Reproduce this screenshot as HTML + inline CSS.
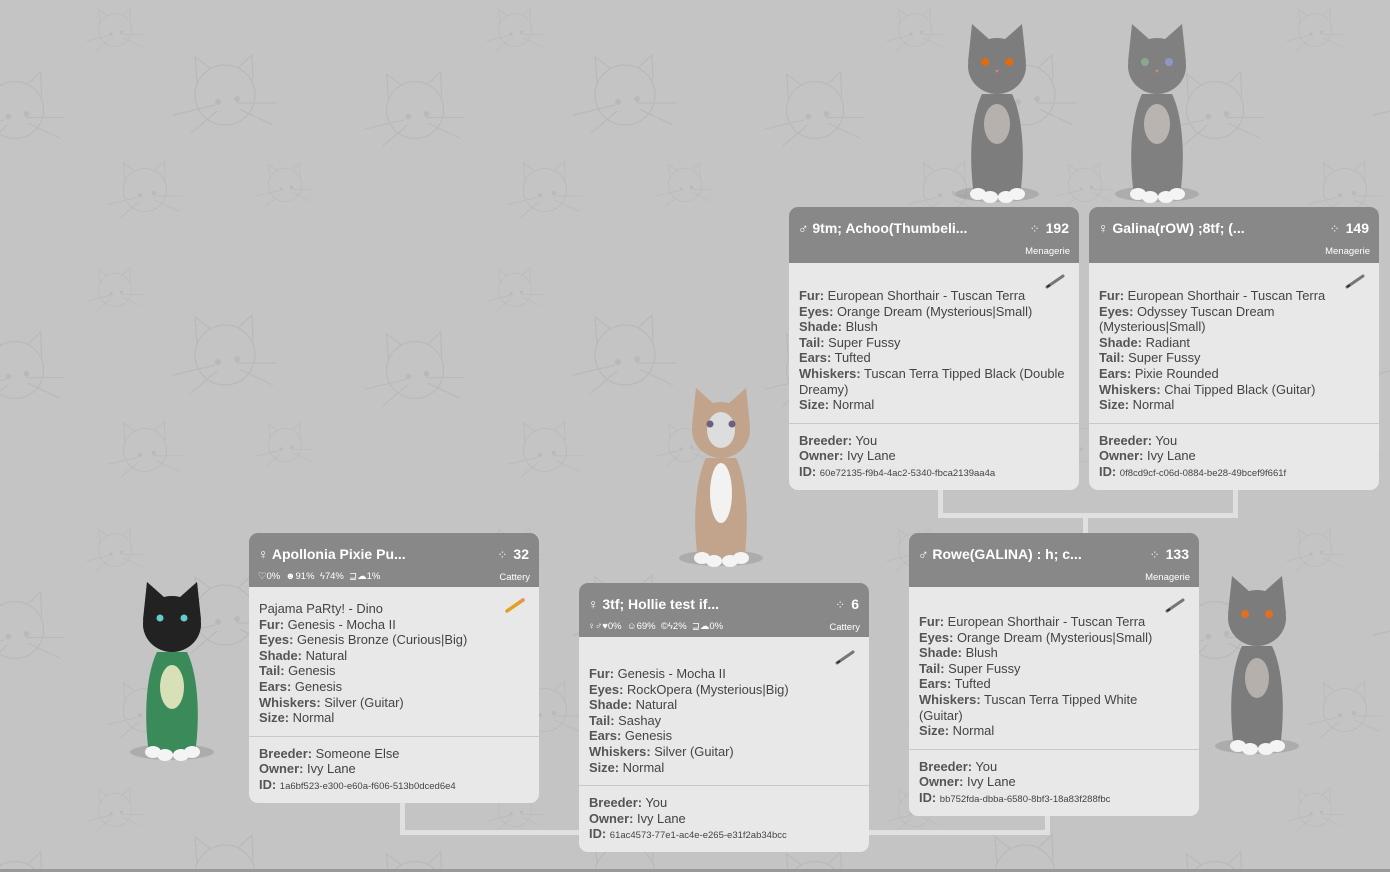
<!DOCTYPE html>
<html><head><meta charset="utf-8">
<style>
html,body{margin:0;padding:0}
body{width:1390px;height:872px;overflow:hidden;position:relative;background:#c4c4c4;font-family:"Liberation Sans","DejaVu Sans",sans-serif;}
.bg{position:absolute;left:0;top:0}
.card{position:absolute;width:290px;background:#e8e8e8;border-radius:9px;overflow:hidden;color:#444;font-size:12.9px;line-height:15.6px}
.hd{background:#888;color:#fff;height:56px;position:relative}
.hd .t{position:absolute;left:9px;top:14px;font-weight:bold;font-size:14px;color:#fff}
.hd .n{position:absolute;right:10px;top:14px;font-weight:bold;font-size:14px}
.hd .n span{font-weight:normal;font-size:12px;margin-right:6px;color:#eee}
.hd .s{position:absolute;left:9px;top:36px;font-size:9.5px}
.hd .c{position:absolute;right:9px;top:37px;font-size:9.5px}
.bd{padding:8px 10px 10px 10px;position:relative;border-bottom:1px solid #c8c8c8}
.ft{padding:9px 10px 8px 10px}
b{color:#555}
.id{font-size:9.5px}
.pen{position:absolute;right:12px;top:10px}
.ln{position:absolute;background:#e0e0e0}
.cat{position:absolute}
</style></head><body>
<svg class="bg" width="1390" height="872">
<defs>
<g id="f" fill="none" stroke="#b9b9b9" stroke-width="1.2">
<circle cx="0" cy="0" r="30"/>
<path d="M-28 -12 L-30 -38 L-14 -26 M14 -28 L27 -40 L28 -14"/>
<path d="M-10 10 L-52 20 M-8 16 L-34 38 M12 8 L52 8 M14 14 L48 30"/>
<circle cx="-7" cy="7" r="3" fill="#b9b9b9" stroke="none"/><circle cx="12" cy="4" r="3" fill="#b9b9b9" stroke="none"/>
</g>
<pattern id="p" width="400" height="260" patternUnits="userSpaceOnUse" x="-60" y="-20">
<use href="#f" transform="translate(175,50) scale(.55)"/>
<use href="#f" transform="translate(285,115)"/>
<use href="#f" transform="translate(75,130) scale(.95)"/>
<use href="#f" transform="translate(205,210) scale(.72)"/>
<use href="#f" transform="translate(345,205) scale(.55)"/>
</pattern>
</defs>
<rect width="1390" height="872" fill="url(#p)"/>
<rect y="869" width="1390" height="3" fill="#999"/>
</svg>

<svg width="0" height="0" style="position:absolute">
<defs>
<g id="cat">
<ellipse cx="45" cy="180" rx="42" ry="8" fill="#000" opacity=".12"/>
<path d="M22 182 C16 140 20 100 30 80 L60 80 C70 100 74 140 68 182 Z"/>
<path d="M16 48 L20 10 L38 26 Z M52 26 L70 10 L74 48 Z"/>
<ellipse cx="45" cy="52" rx="29" ry="28"/>
</g>
<g id="paws" fill="#f4f4f4"><ellipse cx="26" cy="180" rx="8" ry="6"/><ellipse cx="38" cy="183" rx="8" ry="6"/><ellipse cx="54" cy="183" rx="8" ry="6"/><ellipse cx="65" cy="180" rx="8" ry="6"/></g>
<g id="pen"><path d="M2 14 L18 3" stroke="#777" stroke-width="3" stroke-linecap="round"/><path d="M2 14 L5 12" stroke="#333" stroke-width="2"/></g>
</defs></svg>

<svg class="cat" style="left:952px;top:14px" width="90" height="190"><use href="#cat" fill="#7d7d7d"/><ellipse cx="45" cy="110" rx="13" ry="20" fill="#b7b1ad"/><circle cx="33" cy="48" r="4" fill="#e26a10"/><circle cx="57" cy="48" r="4" fill="#e26a10"/><path d="M43 56 l4 0 l-2 3z" fill="#c88"/><use href="#paws"/></svg>
<svg class="cat" style="left:1112px;top:14px" width="90" height="190"><use href="#cat" fill="#808080"/><ellipse cx="45" cy="110" rx="13" ry="20" fill="#b9b4b0"/><circle cx="33" cy="48" r="4" fill="#8aa890"/><circle cx="57" cy="48" r="4" fill="#8f96c4"/><path d="M43 56 l4 0 l-2 3z" fill="#c88"/><use href="#paws"/></svg>
<svg class="cat" style="left:676px;top:378px" width="90" height="190"><use href="#cat" fill="#c2a48c"/><ellipse cx="45" cy="52" rx="14" ry="18" fill="#ddd"/><ellipse cx="45" cy="115" rx="11" ry="30" fill="#f2f2f2"/><circle cx="34" cy="46" r="3.5" fill="#6a6080"/><circle cx="56" cy="46" r="3.5" fill="#6a6080"/><use href="#paws"/></svg>
<svg class="cat" style="left:127px;top:572px" width="90" height="190"><use href="#cat" fill="#3a8a5a"/><ellipse cx="45" cy="52" rx="29" ry="28" fill="#222"/><path d="M16 48 L20 10 L38 26 Z M52 26 L70 10 L74 48 Z" fill="#222"/><ellipse cx="45" cy="115" rx="12" ry="22" fill="#d8e0b8"/><circle cx="33" cy="46" r="3.5" fill="#6cc"/><circle cx="57" cy="46" r="3.5" fill="#6cc"/><use href="#paws" fill="#cfeed8"/></svg>
<svg class="cat" style="left:1212px;top:566px" width="90" height="190"><use href="#cat" fill="#7c7c7c"/><ellipse cx="45" cy="112" rx="12" ry="20" fill="#b5b0ac"/><circle cx="33" cy="48" r="4" fill="#e07020"/><circle cx="57" cy="48" r="4" fill="#e07020"/><use href="#paws"/></svg>

<div class="ln" style="left:938px;top:488px;width:5px;height:30px"></div>
<div class="ln" style="left:1233px;top:488px;width:5px;height:30px"></div>
<div class="ln" style="left:938px;top:513px;width:300px;height:5px"></div>
<div class="ln" style="left:1083px;top:513px;width:5px;height:22px"></div>
<div class="ln" style="left:400px;top:800px;width:5px;height:35px"></div>
<div class="ln" style="left:1045px;top:812px;width:5px;height:23px"></div>
<div class="ln" style="left:400px;top:830px;width:650px;height:5px"></div>

<div class="card" style="left:789px;top:207px">
<div class="hd"><div class="t">♂ 9tm; Achoo(Thumbeli...</div><div class="n"><span>⁘</span>192</div><div class="c">Menagerie</div></div>
<div class="bd" style="padding-top:25px"><svg class="pen" width="22" height="16"><use href="#pen"/></svg>
<b>Fur:</b> European Shorthair - Tuscan Terra<br><b>Eyes:</b> Orange Dream (Mysterious|Small)<br><b>Shade:</b> Blush<br><b>Tail:</b> Super Fussy<br><b>Ears:</b> Tufted<br><b>Whiskers:</b> Tuscan Terra Tipped Black (Double Dreamy)<br><b>Size:</b> Normal</div>
<div class="ft"><b>Breeder:</b> You<br><b>Owner:</b> Ivy Lane<br><b>ID:</b> <span class="id">60e72135-f9b4-4ac2-5340-fbca2139aa4a</span></div>
</div>

<div class="card" style="left:1089px;top:207px">
<div class="hd"><div class="t">♀ Galina(rOW) ;8tf; (...</div><div class="n"><span>⁘</span>149</div><div class="c">Menagerie</div></div>
<div class="bd" style="padding-top:25px"><svg class="pen" width="22" height="16"><use href="#pen"/></svg>
<b>Fur:</b> European Shorthair - Tuscan Terra<br><b>Eyes:</b> Odyssey Tuscan Dream (Mysterious|Small)<br><b>Shade:</b> Radiant<br><b>Tail:</b> Super Fussy<br><b>Ears:</b> Pixie Rounded<br><b>Whiskers:</b> Chai Tipped Black (Guitar)<br><b>Size:</b> Normal</div>
<div class="ft"><b>Breeder:</b> You<br><b>Owner:</b> Ivy Lane<br><b>ID:</b> <span class="id">0f8cd9cf-c06d-0884-be28-49bcef9f661f</span></div>
</div>

<div class="card" style="left:249px;top:533px">
<div class="hd" style="height:54px"><div class="t">♀ Apollonia Pixie Pu...</div><div class="n"><span>⁘</span>32</div><div class="s">♡0% &nbsp;☻91% &nbsp;ϟ74% &nbsp;⊒☁1%</div><div class="c">Cattery</div></div>
<div class="bd" style="padding-top:14px"><svg class="pen" width="22" height="16"><path d="M2 14 L18 3" stroke="#e0a020" stroke-width="3.5" stroke-linecap="round"/><path d="M16 4 L19 2" stroke="#e88" stroke-width="3"/></svg>
Pajama PaRty! - Dino<br><b>Fur:</b> Genesis - Mocha II<br><b>Eyes:</b> Genesis Bronze (Curious|Big)<br><b>Shade:</b> Natural<br><b>Tail:</b> Genesis<br><b>Ears:</b> Genesis<br><b>Whiskers:</b> Silver (Guitar)<br><b>Size:</b> Normal</div>
<div class="ft"><b>Breeder:</b> Someone Else<br><b>Owner:</b> Ivy Lane<br><b>ID:</b> <span class="id">1a6bf523-e300-e60a-f606-513b0dced6e4</span></div>
</div>

<div class="card" style="left:579px;top:583px">
<div class="hd" style="height:54px"><div class="t">♀ 3tf; Hollie test if...</div><div class="n"><span>⁘</span>6</div><div class="s">♀♂♥0% &nbsp;☺69% &nbsp;©ϟ2% &nbsp;⊒☁0%</div><div class="c">Cattery</div></div>
<div class="bd" style="padding-top:29px"><svg class="pen" width="22" height="16" style="top:12px"><use href="#pen"/></svg>
<b>Fur:</b> Genesis - Mocha II<br><b>Eyes:</b> RockOpera (Mysterious|Big)<br><b>Shade:</b> Natural<br><b>Tail:</b> Sashay<br><b>Ears:</b> Genesis<br><b>Whiskers:</b> Silver (Guitar)<br><b>Size:</b> Normal</div>
<div class="ft"><b>Breeder:</b> You<br><b>Owner:</b> Ivy Lane<br><b>ID:</b> <span class="id">61ac4573-77e1-ac4e-e265-e31f2ab34bcc</span></div>
</div>

<div class="card" style="left:909px;top:533px">
<div class="hd" style="height:54px"><div class="t">♂ Rowe(GALINA) : h; c...</div><div class="n"><span>⁘</span>133</div><div class="c">Menagerie</div></div>
<div class="bd" style="padding-top:27px"><svg class="pen" width="22" height="16"><use href="#pen"/></svg>
<b>Fur:</b> European Shorthair - Tuscan Terra<br><b>Eyes:</b> Orange Dream (Mysterious|Small)<br><b>Shade:</b> Blush<br><b>Tail:</b> Super Fussy<br><b>Ears:</b> Tufted<br><b>Whiskers:</b> Tuscan Terra Tipped White<br>(Guitar)<br><b>Size:</b> Normal</div>
<div class="ft"><b>Breeder:</b> You<br><b>Owner:</b> Ivy Lane<br><b>ID:</b> <span class="id">bb752fda-dbba-6580-8bf3-18a83f288fbc</span></div>
</div>
</body></html>
